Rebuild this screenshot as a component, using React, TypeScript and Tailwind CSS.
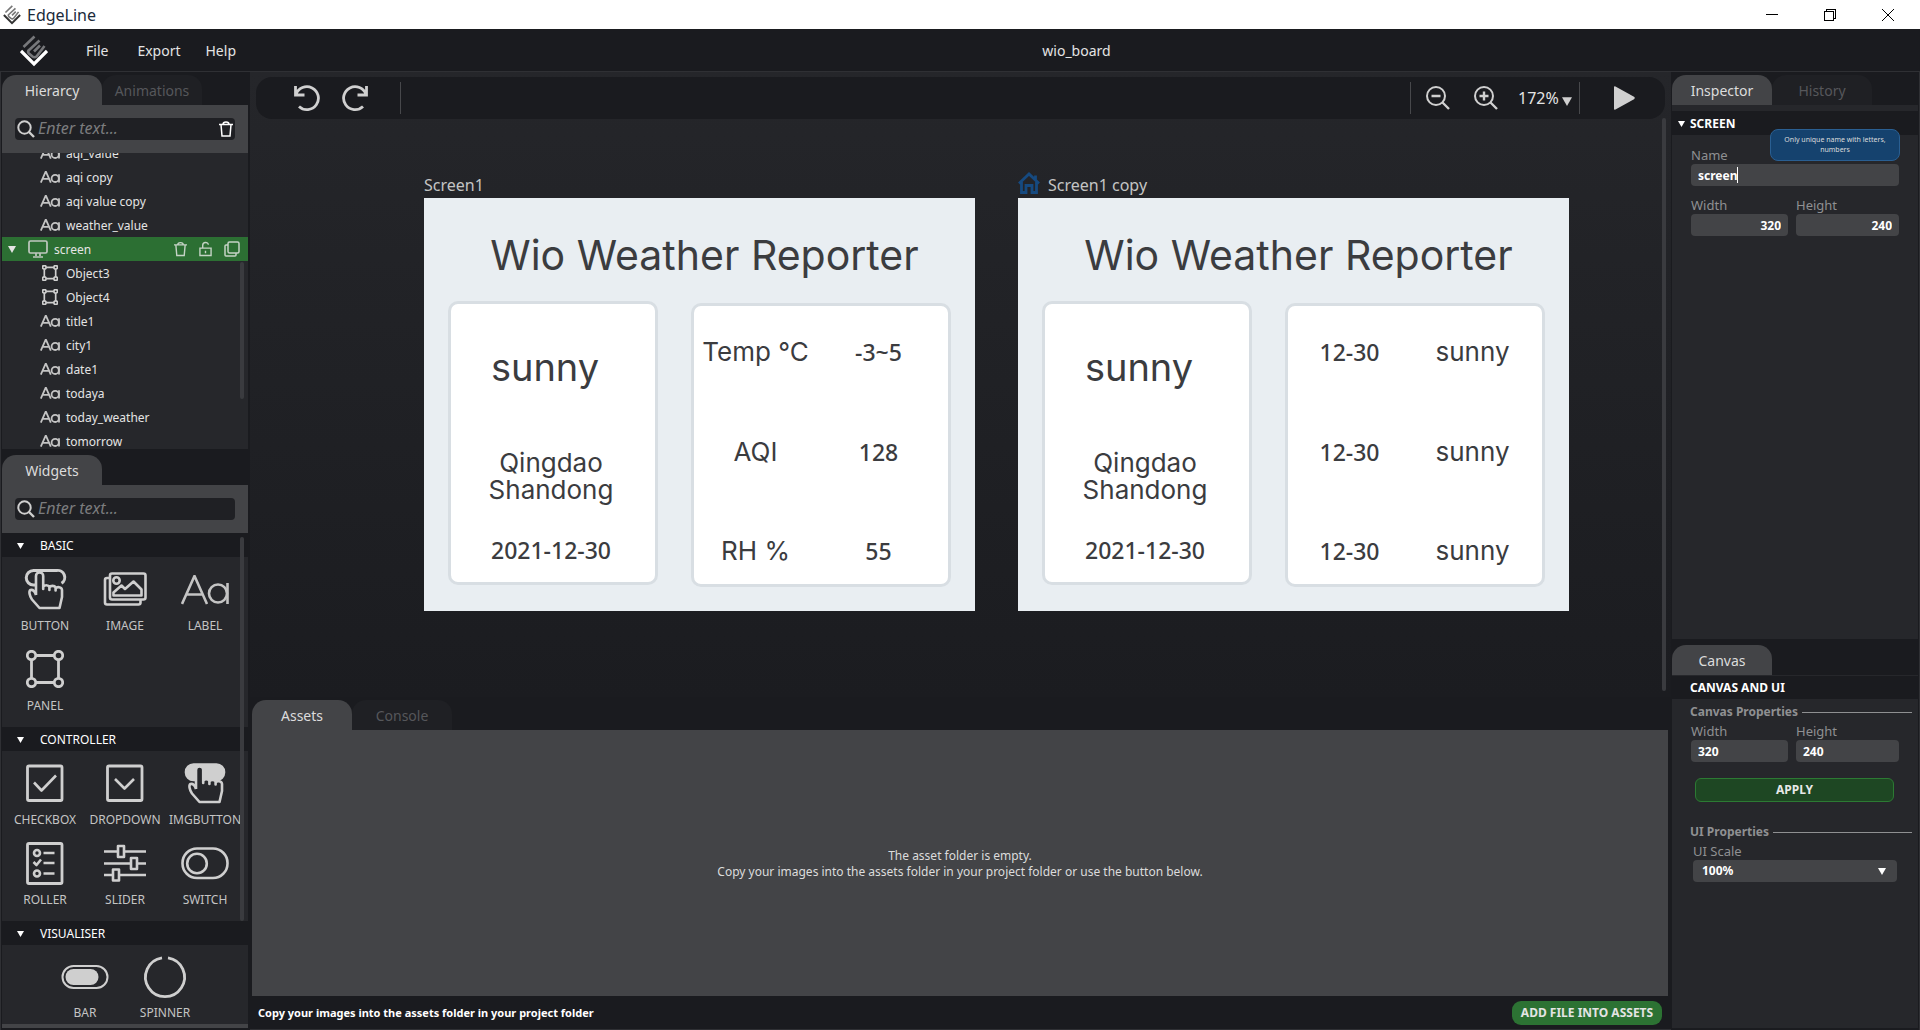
import type { ReactNode } from "react";
import clsx from "clsx";

type NodeKind = "label" | "panel" | "screen";

type TreeNode = { name: string; kind: NodeKind };

const TREE: TreeNode[] = [
  { name: "aqi_value", kind: "label" },
  { name: "aqi copy", kind: "label" },
  { name: "aqi value copy", kind: "label" },
  { name: "weather_value", kind: "label" },
  { name: "screen", kind: "screen" },
  { name: "Object3", kind: "panel" },
  { name: "Object4", kind: "panel" },
  { name: "title1", kind: "label" },
  { name: "city1", kind: "label" },
  { name: "date1", kind: "label" },
  { name: "todaya", kind: "label" },
  { name: "today_weather", kind: "label" },
  { name: "tomorrow", kind: "label" },
];

const SCREENS = [
  {
    name: "Screen1",
    home: false,
    rows: [
      ["Temp °C", "-3~5"],
      ["AQI", "128"],
      ["RH %", "55"],
    ],
  },
  {
    name: "Screen1 copy",
    home: true,
    rows: [
      ["12-30", "sunny"],
      ["12-30", "sunny"],
      ["12-30", "sunny"],
    ],
  },
];

/* ---------- icons ---------- */

function Logo({ className, top, bottom }: { className: string; top: string; bottom: string }) {
  return (
    <svg viewBox="0 0 28 32" className={className} fill="none" strokeWidth="2.6" aria-hidden="true">
      <g stroke={top}>
        <path d="M3.5 12 L14.5 1.5" />
        <path d="M8 16 L19.500 5.500" />
        <path d="M8.500 15.500 q-1 1.500 0.500 3 L12.500 21.500 q2 1.500 4 0 L24.500 11" />
        <path d="M14 16.500 L20 10.500" />
      </g>
      <path d="M1 16 L14 29 L27 16" stroke={bottom} strokeWidth="3.2" />
    </svg>
  );
}

function Caret({ className }: { className?: string }) {
  return (
    <svg viewBox="0 0 8 8" className={clsx("pointer-events-none", className)} aria-hidden="true">
      <path d="M0 1 H8 L4 8 Z" fill="currentColor" />
    </svg>
  );
}

function SearchIcon() {
  return (
    <svg viewBox="0 0 18 18" className="h-[18px] w-[18px] shrink-0" fill="none" stroke="#cfcfcf" strokeWidth="2" aria-hidden="true">
      <circle cx="7.500" cy="7.500" r="6.200" />
      <path d="M12 12 L17 17" strokeWidth="2.4" />
    </svg>
  );
}

function TrashIcon({ className }: { className: string }) {
  return (
    <svg viewBox="0 0 14 16" className={className} fill="none" stroke="currentColor" strokeWidth="1.500" aria-hidden="true">
      <path d="M0 3.500 H14 M4 3.500 C4 0.300 10 0.300 10 3.500 M2 3.500 L3 15 H11 L12 3.500" />
    </svg>
  );
}

function LetterIcon({ className, weight }: { className: string; weight: number }) {
  return (
    <svg viewBox="0 0 48 30" className={className} fill="none" stroke="#c4c4c4" strokeWidth={weight} aria-hidden="true">
      <path d="M1 29 L13.500 1 L26 29 M6 19.500 H21" />
      <circle cx="37" cy="18.500" r="9" />
      <path d="M46.500 8 V29" />
    </svg>
  );
}

function PanelIcon({ className, weight }: { className: string; weight: number }) {
  return (
    <svg viewBox="0 0 38 38" className={className} fill="none" stroke="#cfcfcf" strokeWidth={weight} aria-hidden="true">
      <path d="M10 5.500 H28 M10 32.500 H28 M5.500 10 V28 M32.500 10 V28" />
      <circle cx="5.500" cy="5.500" r="4.200" />
      <circle cx="32.500" cy="5.500" r="4.200" />
      <circle cx="5.500" cy="32.500" r="4.200" />
      <circle cx="32.500" cy="32.500" r="4.200" />
    </svg>
  );
}

function MonitorIcon() {
  return (
    <svg viewBox="0 0 20 18" className="h-[18px] w-5" fill="none" stroke="#c0c8c0" strokeWidth="1.700" aria-hidden="true">
      <rect x="1" y="1" width="18" height="12" rx="1.500" />
      <path d="M8 13 V16 M12 13 V16 M5 17 H15" />
    </svg>
  );
}

function WidgetSvg({ children }: { children: ReactNode }) {
  return (
    <svg
      viewBox="0 0 48 48"
      className="h-12 w-12"
      fill="none"
      stroke="#cfcfcf"
      strokeWidth="2.600"
      strokeLinejoin="round"
      aria-hidden="true"
    >
      {children}
    </svg>
  );
}

const HAND =
  "M15 29 V10 a3.600 3.600 0 0 1 7.200 0 V23 v-2 c1-2.400 5.200-2.400 6.200 0 v3 v-2.500 c1-2.200 5.200-2.200 6.200 0 v3 v-2 c1-2 6.200-2 6.400 1.500 V31 L38.500 42 H18.500 L11 33.500 C8.500 30 7.500 25 9.500 24 C12 23.500 14 26 15 29";

const BASIC = [
  {
    name: "BUTTON",
    icon: (
      <WidgetSvg>
        <path d="M15 19 H12.500 a7 7 0 0 1 0-14.500 H35.500 a7 7 0 0 1 5 12.800" strokeWidth="3" />
        <path d={HAND} />
      </WidgetSvg>
    ),
  },
  {
    name: "IMAGE",
    icon: (
      <WidgetSvg>
        <rect x="9" y="7.500" width="35.500" height="26" rx="2" />
        <path d="M9 12 H6 a2 2 0 0 0-2 2 V36.500 a2 2 0 0 0 2 2 H37.500 a2 2 0 0 0 2-2 V34" />
        <circle cx="15.500" cy="14.500" r="3.200" />
        <path d="M12.500 29.500 V26.500 L20.500 19.500 L24 23 L32.500 15.500 L40.500 23.500 V29.500 Z" />
      </WidgetSvg>
    ),
  },
  { name: "LABEL", icon: <LetterIcon className="my-[9px] h-[30px] w-12" weight={2.6} /> },
  { name: "PANEL", icon: <PanelIcon className="mt-1 mb-[6px] h-[38px] w-[38px]" weight={2.8} /> },
];

const CONTROLLER = [
  {
    name: "CHECKBOX",
    icon: (
      <WidgetSvg>
        <rect x="6.500" y="6" width="34.500" height="34.500" rx="1.500" strokeWidth="2.800" />
        <path d="M13 22.500 L20.500 30.500 L35 15.500" />
      </WidgetSvg>
    ),
  },
  {
    name: "DROPDOWN",
    icon: (
      <WidgetSvg>
        <rect x="6.500" y="6" width="34.500" height="34.500" rx="1.500" strokeWidth="2.800" />
        <path d="M14 19 L23.500 28.500 L33 19" />
      </WidgetSvg>
    ),
  },
  {
    name: "IMGBUTTON",
    icon: (
      <WidgetSvg>
        <rect x="5" y="4.500" width="38" height="15.500" rx="7.500" fill="#cfcfcf" />
        <path d={HAND} fill="#26272b" />
      </WidgetSvg>
    ),
  },
  {
    name: "ROLLER",
    icon: (
      <WidgetSvg>
        <rect x="6.500" y="3.500" width="34.500" height="40" rx="1.500" strokeWidth="2.800" />
        <circle cx="16" cy="13" r="3" />
        <path d="M12.500 22 L15.500 25 L20 19.500" />
        <circle cx="16" cy="33.500" r="3" />
        <path d="M22.500 13 H33.500 M22.500 23 H33.500 M22.500 33.500 H33.500" />
      </WidgetSvg>
    ),
  },
  {
    name: "SLIDER",
    icon: (
      <WidgetSvg>
        <path d="M3 11.500 H17 M23 11.500 H45 M3 23.500 H30 M36.500 23.500 H45 M3 35 H12 M18 35 H45" />
        <rect x="17" y="6" width="6" height="11" />
        <rect x="30" y="18" width="6" height="11" />
        <rect x="12" y="29.500" width="6" height="11" />
      </WidgetSvg>
    ),
  },
  {
    name: "SWITCH",
    icon: (
      <WidgetSvg>
        <rect x="1.500" y="8.500" width="45" height="29.500" rx="14.500" />
        <circle cx="16" cy="23.500" r="9.800" />
      </WidgetSvg>
    ),
  },
];

const VISUALISER = [
  {
    name: "BAR",
    icon: (
      <WidgetSvg>
        <rect x="1.500" y="13" width="45" height="22" rx="11" strokeWidth="2" />
        <rect x="4.500" y="16" width="33" height="16" rx="8" fill="#cfcfcf" stroke="none" />
      </WidgetSvg>
    ),
  },
  {
    name: "SPINNER",
    icon: (
      <WidgetSvg>
        <path d="M27 4.800 A19.500 19.500 0 1 1 21 4.800" strokeWidth="2.800" />
      </WidgetSvg>
    ),
  },
];

/* ---------- shared pieces ---------- */

function Tab({ children, active = false }: { children: ReactNode; active?: boolean }) {
  return (
    <button
      type="button"
      role="tab"
      aria-selected={active}
      className={clsx(
        "h-[30px] w-[100px] rounded-t-[14px] pt-px text-sm",
        active ? "bg-[#434447] text-[#dcdcdc]" : "bg-[#1f2024] text-[#56575b]",
      )}
    >
      {children}
    </button>
  );
}

function SearchBox({ label, trash = false }: { label: string; trash?: boolean }) {
  return (
    <div className="bg-[#434447] px-[13px] py-[13px]">
      <div className="flex h-[22px] items-center gap-[3px] rounded bg-[#1f2024] px-[2px]">
        <SearchIcon />
        <input
          type="text"
          aria-label={label}
          placeholder="Enter text..."
          className="h-[22px] min-w-0 flex-1 bg-transparent pb-[2px] text-base leading-5 italic outline-none placeholder:text-[#7b7c7e]"
        />
        {trash ? (
          <button type="button" aria-label="Delete" className="text-white">
            <TrashIcon className="h-4 w-[14px]" />
          </button>
        ) : null}
      </div>
    </div>
  );
}

function WidgetGroup({ title, items, children }: { title: string; items?: typeof BASIC; children?: ReactNode }) {
  return (
    <section>
      <h2 className="flex h-6 items-center bg-[#1a1b1f] pt-px pl-[15px] text-xs text-white">
        <Caret className="mr-4 h-[7px] w-[7px]" />
        {title}
      </h2>
      {items ? (
        <div className="grid grid-cols-[80px_80px_80px] gap-y-2 py-[9px] pl-[3px]">
          {items.map((item) => (
            <WidgetButton key={item.name} name={item.name} icon={item.icon} />
          ))}
        </div>
      ) : null}
      {children}
    </section>
  );
}

function WidgetButton({ name, icon }: { name: string; icon: ReactNode }) {
  return (
    <button type="button" className="flex w-20 flex-col items-center text-xs leading-6 text-[#c4c4c4]">
      {icon}
      {name}
    </button>
  );
}

function NumberField({ id, label, value, right = false }: { id: string; label: string; value: string; right?: boolean }) {
  return (
    <div className="flex flex-col">
      <label htmlFor={id} className="text-[13px] leading-[18px] text-[#8f9092]">
        {label}
      </label>
      <input
        id={id}
        type="text"
        defaultValue={value}
        className={clsx(
          "h-[22px] w-full rounded bg-[#434447] px-[7px] pt-px text-xs font-bold text-white outline-none",
          right && "text-right",
        )}
      />
    </div>
  );
}

/* ---------- regions ---------- */

function TitleBar() {
  return (
    <header className="flex h-[29px] shrink-0 items-center bg-white text-[#1a2a3a]">
      <Logo className="ml-[3px] h-5 w-[18px]" top="#777" bottom="#333" />
      <h1 className="ml-[6px] text-base leading-none">EdgeLine</h1>
      <div className="ml-auto flex items-center text-black">
        <button type="button" aria-label="Minimize" className="flex h-7 w-[58px] items-center justify-center">
          <svg viewBox="0 0 12 12" className="h-3 w-3" stroke="currentColor" shapeRendering="crispEdges">
            <path d="M0 5.500 H12" />
          </svg>
        </button>
        <button type="button" aria-label="Restore" className="flex h-7 w-[58px] items-center justify-center">
          <svg viewBox="0 0 12 12" className="h-3 w-3" fill="none" stroke="currentColor" shapeRendering="crispEdges">
            <path d="M0.500 2.500 H9.500 V11.500 H0.500 Z M2.500 2.500 V0.500 H11.500 V9.500 H9.500" />
          </svg>
        </button>
        <button type="button" aria-label="Close" className="mr-[3px] flex h-7 w-[58px] items-center justify-center">
          <svg viewBox="0 0 12 12" className="h-3 w-3" stroke="currentColor">
            <path d="M0 0 L12 12 M12 0 L0 12" />
          </svg>
        </button>
      </div>
    </header>
  );
}

function MenuBar() {
  return (
    <nav className="flex h-[43px] shrink-0 items-center border-b border-[#2f3034] pt-[2px] text-sm text-[#e4e4e4]">
      <Logo className="ml-5 h-8 w-7" top="#77787b" bottom="#ffffff" />
      <button type="button" className="ml-[38px]">File</button>
      <button type="button" className="ml-[29px]">Export</button>
      <button type="button" className="ml-[25px]">Help</button>
      <p className="flex-1 pl-[75px] text-center">wio_board</p>
      <span className="w-[78px]" />
    </nav>
  );
}

function TreeRow({ node }: { node: TreeNode }) {
  if (node.kind === "screen") {
    return (
      <li className="flex h-6 items-center bg-[#2c6f33] pr-2 pl-[6px]">
        <Caret className="mr-3 h-2 w-2" />
        <MonitorIcon />
        <button type="button" className="ml-[6px] pt-px">{node.name}</button>
        <div className="ml-auto flex items-center gap-3 text-[#c5d3c6]">
          <button type="button" aria-label="Delete screen">
            <TrashIcon className="h-4 w-[13px]" />
          </button>
          <button type="button" aria-label="Lock screen">
            <svg viewBox="0 0 14 16" className="h-4 w-[13px]" fill="none" stroke="currentColor" strokeWidth="1.500">
              <path d="M1 7 H13 V15 H1 Z M4 7 V4 C4 0 10 0 10 3.500 M7 10 V12.500" />
            </svg>
          </button>
          <button type="button" aria-label="Duplicate screen">
            <svg viewBox="0 0 16 16" className="h-4 w-4" fill="none" stroke="currentColor" strokeWidth="1.500">
              <rect x="4" y="1" width="11" height="11" rx="1.500" />
              <path d="M4 4 H2 a1 1 0 0 0-1 1 V14 a1 1 0 0 0 1 1 H11 a1 1 0 0 0 1-1 V12" />
            </svg>
          </button>
        </div>
      </li>
    );
  }

  return (
    <li className="flex h-6 items-center pl-[38px]">
      {node.kind === "label" ? (
        <LetterIcon className="h-3 w-5" weight={4.5} />
      ) : (
        <PanelIcon className="mx-[2px] h-4 w-4" weight={4} />
      )}
      <button type="button" className="ml-[6px] pt-px">{node.name}</button>
    </li>
  );
}

function LeftPanel() {
  return (
    <aside className="flex w-[250px] shrink-0 flex-col border-l border-[#2f3034] pt-[3px] pr-[2px] pl-px">
      <div role="tablist" className="flex">
        <Tab active>Hierarcy</Tab>
        <Tab>Animations</Tab>
      </div>
      <SearchBox label="Search hierarchy" trash />
      <div className="relative h-[296px] shrink-0 overflow-hidden bg-[#26272b]">
        <ul className="-mt-3 text-xs text-[#e4e4e4]">
          {TREE.map((node) => (
            <TreeRow key={node.name} node={node} />
          ))}
        </ul>
        <span className="absolute top-[109px] right-1 h-[137px] w-1 rounded bg-[#3a3b3f]" />
      </div>

      <div role="tablist" className="mt-[6px] flex">
        <Tab active>Widgets</Tab>
      </div>
      <SearchBox label="Search widgets" />
      <div className="relative min-h-0 flex-1 overflow-hidden bg-[#26272b]">
        <WidgetGroup title="BASIC" items={BASIC} />
        <WidgetGroup title="CONTROLLER" items={CONTROLLER} />
        <WidgetGroup title="VISUALISER">
          <div className="flex justify-center py-2">
            {VISUALISER.map((item) => (
              <WidgetButton key={item.name} name={item.name} icon={item.icon} />
            ))}
          </div>
        </WidgetGroup>
        <span className="absolute top-1 right-1 h-[384px] w-1 rounded bg-[#3a3b3f]" />
      </div>
      <div className="mb-[2px] h-1 shrink-0 bg-[#434447]" />
    </aside>
  );
}

function Toolbar() {
  return (
    <div className="mx-[6px] flex h-[42px] items-center rounded-[16px] bg-[#1a1b1f] text-[#d0d0d0]">
      <button type="button" aria-label="Undo" className="ml-[37px]">
        <svg viewBox="0 0 28 28" className="h-7 w-7" fill="none" stroke="currentColor" strokeWidth="2.800">
          <path d="M2.500 2 V11 H11.500 M3 10.500 A11.500 11.500 0 1 1 6 22.500" />
        </svg>
      </button>
      <button type="button" aria-label="Redo" className="ml-5">
        <svg viewBox="0 0 28 28" className="h-7 w-7" fill="none" stroke="currentColor" strokeWidth="2.800">
          <path d="M25.500 2 V11 H16.500 M25 10.500 A11.500 11.500 0 1 0 22 22.500" />
        </svg>
      </button>
      <span className="ml-[31px] h-8 w-px bg-[#47484b]" />
      <span className="ml-auto h-8 w-px bg-[#47484b]" />
      <button type="button" aria-label="Zoom out" className="ml-[15px]">
        <svg viewBox="0 0 24 24" className="h-6 w-6" fill="none" stroke="currentColor" strokeWidth="2">
          <circle cx="10" cy="10" r="9" />
          <path d="M5.500 10 H14.500 M16.500 16.500 L23 23" strokeWidth="2.400" />
        </svg>
      </button>
      <button type="button" aria-label="Zoom in" className="ml-6">
        <svg viewBox="0 0 24 24" className="h-6 w-6" fill="none" stroke="currentColor" strokeWidth="2">
          <circle cx="10" cy="10" r="9" />
          <path d="M5.500 10 H14.500 M10 5.500 V14.500 M16.500 16.500 L23 23" strokeWidth="2.400" />
        </svg>
      </button>
      <div className="relative ml-5">
        <select
          aria-label="Zoom level"
          defaultValue="172%"
          className="w-[54px] appearance-none bg-transparent text-base text-[#e4e4e4] outline-none"
        >
          <option>172%</option>
        </select>
        <Caret className="absolute right-0 bottom-1 h-[10px] w-[10px]" />
      </div>
      <span className="ml-[7px] h-8 w-px bg-[#47484b]" />
      <button type="button" aria-label="Play" className="mr-[30px] ml-[34px]">
        <svg viewBox="0 0 21 24" className="h-6 w-[21px]">
          <path d="M0 1 Q0 0 1.500 0.500 L20 10.800 Q21.500 12 20 13.200 L1.500 23.500 Q0 24 0 23 Z" fill="currentColor" />
        </svg>
      </button>
    </div>
  );
}

// Readings that are only digits and signs are set in the narrower numeral face.
function previewFont(text: string) {
  return /[a-z]/i.test(text) ? "text-[26px]" : "font-['Noto_Sans',sans-serif] text-[23px] font-medium";
}

function ScreenPreview({ screen }: { screen: (typeof SCREENS)[number] }) {
  return (
    <figure className="w-[551px] shrink-0">
      <figcaption className="flex h-[26px] items-center gap-2 text-base text-[#c4c4c4]">
        {screen.home ? (
          <svg viewBox="0 0 22 22" className="-mt-1 h-[22px] w-[22px]" fill="none" stroke="#164a80" strokeWidth="2.800">
            <path d="M1 11.500 L11 2 L21 11.500 M17.500 8 V3.500 M3.500 10 V20.500 H8 V13.500 H14 V20.500 H18.500 V10" />
          </svg>
        ) : null}
        {screen.name}
      </figcaption>
      <div className="flex h-[413px] flex-col bg-[#e9eef2] font-['Inter','Noto_Sans',sans-serif] text-[#3b3c3f]">
        <p className="pt-8 pl-[10px] text-center text-[41px] leading-[50px]">Wio Weather Reporter</p>
        <div className="mt-[21px] flex items-start pl-6">
          <div className="flex h-[284px] w-[210px] flex-col items-center rounded-[10px] border-[3px] border-[#d8dee3] bg-white pr-1 text-center text-[26px]">
            <p className="mt-10 pr-3 text-[38px] leading-[46px]">sunny</p>
            <p className="mt-[59px] leading-[27px]">
              Qingdao
              <br />
              Shandong
            </p>
            <p className="mt-[30px] font-['Noto_Sans',sans-serif] text-[23px] leading-[34px] font-medium">2021-12-30</p>
          </div>
          <div className="mt-[2px] ml-[33px] grid h-[284px] w-[260px] grid-cols-2 content-between rounded-[10px] border-[3px] border-[#d8dee3] bg-white pt-[31px] pr-2 pb-[18px] text-center leading-[30px]">
            {screen.rows.flat().map((text, i) => (
              <p key={i} className={previewFont(text)}>
                {text}
              </p>
            ))}
          </div>
        </div>
      </div>
    </figure>
  );
}

function Workspace() {
  return (
    <main className="flex min-w-0 flex-1 flex-col">
      <div className="relative min-h-0 flex-1 overflow-hidden bg-linear-to-b from-[#25262a] to-[#1b1c20] pt-[5px]">
        <Toolbar />
        <div className="flex gap-[43px] pt-[53px] pl-[174px]">
          {SCREENS.map((screen) => (
            <ScreenPreview key={screen.name} screen={screen} />
          ))}
        </div>
        <span className="absolute top-[46px] right-[5px] bottom-[6px] w-1 rounded bg-[#3a3b3f]" />
      </div>

      <div role="tablist" className="flex pt-[3px] pl-[2px]">
        <Tab active>Assets</Tab>
        <Tab>Console</Tab>
      </div>
      <section className="mr-[3px] ml-[2px] flex h-[266px] items-center justify-center bg-[#434447] pt-[2px] text-center text-xs leading-4 text-[#dcdcdc]">
        <p>
          The asset folder is empty.
          <br />
          Copy your images into the assets folder in your project folder or use the button below.
        </p>
      </section>
      <footer className="flex h-[34px] shrink-0 items-center justify-between border-b border-[#2f3034] pr-[9px] pl-2">
        <p className="text-[11px] font-bold text-white">Copy your images into the assets folder in your project folder</p>
        <button
          type="button"
          className="h-6 w-[150px] rounded-[9px] bg-[#2c7233] text-xs font-bold text-[#e4e4e4]"
        >
          ADD FILE INTO ASSETS
        </button>
      </footer>
    </main>
  );
}

function Divider({ children }: { children: ReactNode }) {
  return (
    <h3 className="flex h-5 items-center gap-1 pr-[6px] text-xs font-bold text-[#8f9092]">
      {children}
      <span className="h-px flex-1 bg-[#8f9092]" />
    </h3>
  );
}

function RightPanel() {
  return (
    <aside className="flex w-[249px] shrink-0 flex-col border-r border-[#2f3034] pt-[3px] pr-px pl-px">
      <div role="tablist" className="flex">
        <Tab active>Inspector</Tab>
        <Tab>History</Tab>
      </div>
      <section className="flex-1 bg-[#26272b] pt-[6px]">
        <h2 className="flex h-6 items-center bg-[#1a1b1f] pt-px pl-[6px] text-xs font-bold text-white">
          <Caret className="mr-[5px] h-[7px] w-[7px]" />
          SCREEN
        </h2>
        <div className="pt-[11px] pr-[19px] pl-[19px]">
          <div className="relative">
            <label htmlFor="screen-name" className="block text-[13px] leading-[18px] text-[#8f9092]">
              Name
            </label>
            <input
              id="screen-name"
              type="text"
              defaultValue="screen"
              className="block h-[22px] w-full rounded bg-[#434447] px-[7px] pt-px text-xs font-bold text-white outline-none"
            />
            <span className="absolute bottom-[3px] left-[46px] h-4 w-px bg-white" />
            <p
              role="tooltip"
              className="absolute -top-[17px] -right-px flex h-8 w-[130px] items-center justify-center rounded-lg border border-[#2a5f92] bg-[#15426e] px-2 text-center text-[7px] leading-[10px] text-[#dcdcdc]"
            >
              Only unique name with letters, numbers
            </p>
          </div>
          <div className="grid grid-cols-[97fr_103fr] gap-2 pt-[10px]">
            <NumberField id="screen-width" label="Width" value="320" right />
            <NumberField id="screen-height" label="Height" value="240" right />
          </div>
        </div>
      </section>

      <div role="tablist" className="flex pt-[6px]">
        <Tab active>Canvas</Tab>
      </div>
      <section className="mb-[2px] h-[353px] shrink-0 border-t border-[#26272b] bg-[#26272b]">
        <h2 className="flex h-[23px] items-center bg-[#1a1b1f] pl-[18px] text-xs font-bold text-white">
          CANVAS AND UI
        </h2>
        <div className="pt-[3px] pl-[18px]">
          <Divider>Canvas Properties</Divider>
          <div className="grid grid-cols-[97fr_103fr] gap-2 pr-[19px] pl-px">
            <NumberField id="canvas-width" label="Width" value="320" />
            <NumberField id="canvas-height" label="Height" value="240" />
          </div>
          <div className="pt-4 pr-6 pb-5 pl-[5px]">
            <button
              type="button"
              className="h-6 w-full rounded-md border border-[#2c7a33] bg-[#1e4723] text-xs font-bold text-[#e8e8e8]"
            >
              APPLY
            </button>
          </div>
          <Divider>UI Properties</Divider>
          <div className="relative pr-[21px] pl-[3px]">
            <label htmlFor="ui-scale" className="block text-[13px] leading-[18px] text-[#8f9092]">
              UI Scale
            </label>
            <select
              id="ui-scale"
              defaultValue="100%"
              className="block h-[22px] w-full appearance-none rounded bg-[#434447] px-[9px] text-xs font-bold text-white outline-none"
            >
              <option>100%</option>
            </select>
            <Caret className="absolute right-8 bottom-[7px] h-2 w-2 text-white" />
          </div>
        </div>
      </section>
    </aside>
  );
}

export default function App() {
  return (
    <div className="flex h-screen flex-col overflow-hidden bg-[#1a1b1f] font-['Noto_Sans','Open_Sans',sans-serif] leading-none">
      <TitleBar />
      <MenuBar />
      <div className="flex min-h-0 flex-1">
        <LeftPanel />
        <Workspace />
        <RightPanel />
      </div>
    </div>
  );
}
